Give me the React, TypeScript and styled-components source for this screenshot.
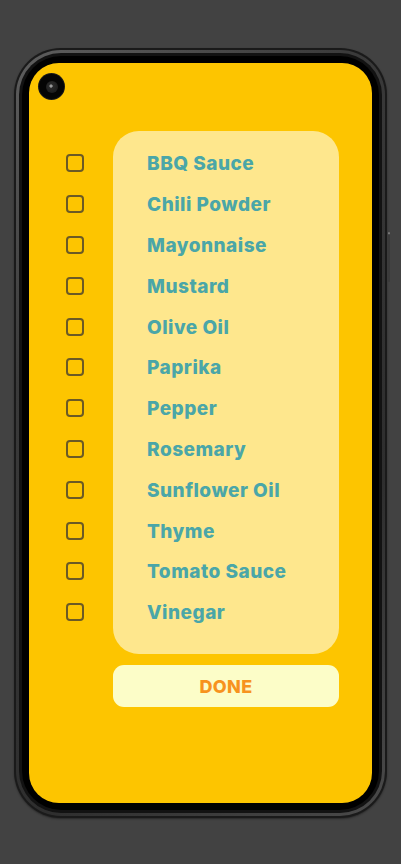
import React from "react";
import styled, { createGlobalStyle } from "styled-components";

const GlobalStyle = createGlobalStyle`
  html, body { margin: 0; padding: 0; background: #424242; }
  * { box-sizing: border-box; }
`;

const items = [
  "BBQ Sauce",
  "Chili Powder",
  "Mayonnaise",
  "Mustard",
  "Olive Oil",
  "Paprika",
  "Pepper",
  "Rosemary",
  "Sunflower Oil",
  "Thyme",
  "Tomato Sauce",
  "Vinegar",
];

const Stage = styled.div`
  width: 401px;
  height: 864px;
  padding: 48px 0 0 14px;
  background: #424242;
  overflow: hidden;
`;

const PhoneBody = styled.div`
  position: relative;
  width: 373px;
  height: 770px;
  border-radius: 47px;
  padding: 2px;
  background: #1a1a1a;
  box-shadow: 0 1px 2px rgba(0, 0, 0, 0.4);
`;

const Rim = styled.div`
  width: 100%;
  height: 100%;
  border-radius: 45px;
  padding: 3px;
  background: linear-gradient(135deg, #5e5e5e 0%, #3a3a3a 30%, #2e2e2e 70%, #4a4a4a 100%);
`;

const InnerRim = styled.div`
  width: 100%;
  height: 100%;
  border-radius: 42px;
  padding: 3px;
  background: #121212;
`;

const Bezel = styled.div`
  width: 100%;
  height: 100%;
  border-radius: 39px;
  padding: 7px;
  background: #000;
`;

const SideButton = styled.div`
  position: absolute;
  right: -3px;
  top: 184px;
  width: 2px;
  height: 50px;
  border-radius: 1px;
  background: #3a3a3a;
  box-shadow: inset 0 2px 0 #777;
`;

const Screen = styled.div`
  position: relative;
  width: 100%;
  height: 100%;
  border-radius: 30px;
  background: #fdc500;
  padding: 68px 0 0 37px;
  overflow: hidden;
`;

const Camera = styled.div`
  position: absolute;
  left: 10px;
  top: 11px;
  width: 25px;
  height: 25px;
  border-radius: 50%;
  background: #050505;
  box-shadow: 0 0 0 1px #1a1a1a;
  display: flex;
  align-items: center;
  justify-content: center;
`;

const Lens = styled.div`
  width: 12px;
  height: 12px;
  border-radius: 50%;
  background: radial-gradient(circle at 42% 42%, #9a9a9a 0 1.2px, #2a2a2a 2px, #161616 100%);
`;

const Layout = styled.div`
  display: grid;
  grid-template-columns: 18px 226px;
  column-gap: 29px;
  row-gap: 11px;
  align-items: start;
`;

const CheckColumn = styled.div`
  display: flex;
  flex-direction: column;
  padding-top: 12px;
`;

const CheckRow = styled.div`
  height: 40.8px;
  display: flex;
  align-items: center;
`;

const Checkbox = styled.div`
  width: 18px;
  height: 18px;
  border: 2px solid #6b5a25;
  border-radius: 4px;
`;

const Card = styled.div`
  height: 523px;
  border-radius: 26px;
  background: #fee78d;
  padding: 12px 0 0 34px;
  display: flex;
  flex-direction: column;
`;

const Item = styled.div`
  height: 40.8px;
  padding-top: 1px;
  display: flex;
  align-items: center;
  font-family: Inter, "Noto Sans", sans-serif;
  font-weight: 800;
  font-size: 19px;
  letter-spacing: 0.5px;
  color: #4aa6a8;
  white-space: nowrap;
`;

const Spacer = styled.div``;

const DoneButton = styled.button`
  height: 42px;
  border: none;
  border-radius: 11px;
  background: #fcfdc8;
  color: #f7931e;
  font-family: Inter, "Noto Sans", sans-serif;
  font-weight: 800;
  font-size: 18px;
  letter-spacing: 0.3px;
  padding: 0;
  cursor: pointer;
`;

export default function App() {
  return (
    <>
      <GlobalStyle />
      <Stage>
        <PhoneBody>
          <SideButton />
          <Rim>
            <InnerRim>
              <Bezel>
                <Screen>
                  <Camera>
                    <Lens />
                  </Camera>
                  <Layout>
                    <CheckColumn>
                      {items.map((it) => (
                        <CheckRow key={it}>
                          <Checkbox />
                        </CheckRow>
                      ))}
                    </CheckColumn>
                    <Card>
                      {items.map((it) => (
                        <Item key={it}>{it}</Item>
                      ))}
                    </Card>
                    <Spacer />
                    <DoneButton>DONE</DoneButton>
                  </Layout>
                </Screen>
              </Bezel>
            </InnerRim>
          </Rim>
        </PhoneBody>
      </Stage>
    </>
  );
}
